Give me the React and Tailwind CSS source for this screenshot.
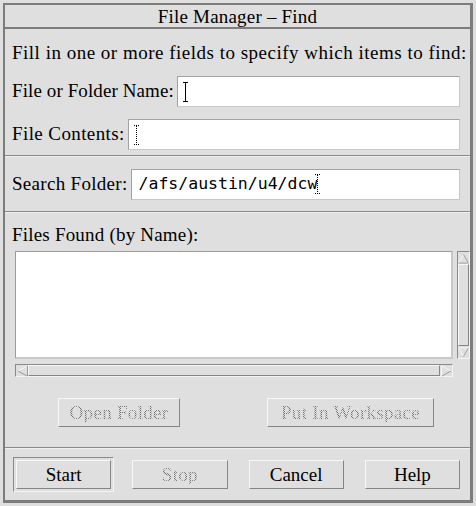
import React from "react";

const SERIF = "font-['Liberation_Serif',serif]";

function Cursor({ dotted = false }) {
  const dash = dotted ? "1 1" : undefined;
  return (
    <svg width="7" height="20" viewBox="0 0 7 20" className="shrink-0">
      <g stroke="#000" strokeWidth="1" strokeDasharray={dash} fill="none">
        <line x1="3.5" y1="1" x2="3.5" y2="19" />
        <line x1="1" y1="0.5" x2="6" y2="0.5" />
        <line x1="1" y1="19.5" x2="6" y2="19.5" />
      </g>
    </svg>
  );
}

function Field({ children }) {
  return (
    <div className="flex-1 h-[31px] bg-white border-t border-l border-t-[#a2a2a2] border-l-[#a2a2a2] border-b border-r border-b-[#c8c8c8] border-r-[#c8c8c8] flex items-center pl-[4px]">
      {children}
    </div>
  );
}

function Separator() {
  return (
    <div className="h-[2px] w-full shrink-0 border-t border-t-[#8a8a8a] border-b border-b-[#f0f0f0]" />
  );
}

function Button({ children, disabled = false, className = "" }) {
  return (
    <div
      className={
        "h-[29px] flex items-center justify-center border border-t-[#f7f7f7] border-l-[#f7f7f7] border-b-[#858585] border-r-[#858585] bg-[#dfdfdf] text-[19px] leading-none " +
        className
      }
    >
      {disabled ? (
        <span className="tracking-[0.3px] bg-[repeating-conic-gradient(#6a6a6a_0_25%,transparent_0_50%)] bg-[length:2px_2px] bg-clip-text text-transparent">
          {children}
        </span>
      ) : (
        <span className="text-black">{children}</span>
      )}
    </div>
  );
}

function Arrow({ dir }) {
  if (dir === "up")
    return (
      <svg width="12" height="11" viewBox="0 0 12 11">
        <polygon points="6,1 11,10 1,10" fill="#dfdfdf" />
        <line x1="6" y1="1" x2="1" y2="10" stroke="#f7f7f7" />
        <line x1="6" y1="1" x2="11" y2="10" stroke="#9a9a9a" />
        <line x1="1" y1="10.5" x2="11" y2="10.5" stroke="#9a9a9a" />
      </svg>
    );
  if (dir === "down")
    return (
      <svg width="12" height="11" viewBox="0 0 12 11">
        <polygon points="1,1 11,1 6,10" fill="#dfdfdf" />
        <line x1="1" y1="0.5" x2="11" y2="0.5" stroke="#f7f7f7" />
        <line x1="1" y1="1" x2="6" y2="10" stroke="#f7f7f7" />
        <line x1="11" y1="1" x2="6" y2="10" stroke="#9a9a9a" />
      </svg>
    );
  if (dir === "left")
    return (
      <svg width="11" height="12" viewBox="0 0 11 12">
        <polygon points="1,6 10,1 10,11" fill="#dfdfdf" />
        <line x1="1" y1="6" x2="10" y2="1" stroke="#f7f7f7" />
        <line x1="1" y1="6" x2="10" y2="11" stroke="#9a9a9a" />
        <line x1="10.5" y1="1" x2="10.5" y2="11" stroke="#9a9a9a" />
      </svg>
    );
  return (
    <svg width="11" height="12" viewBox="0 0 11 12">
      <polygon points="1,1 10,6 1,11" fill="#dfdfdf" />
      <line x1="0.5" y1="1" x2="0.5" y2="11" stroke="#f7f7f7" />
      <line x1="1" y1="1" x2="10" y2="6" stroke="#f7f7f7" />
      <line x1="1" y1="11" x2="10" y2="6" stroke="#9a9a9a" />
    </svg>
  );
}

export default function App() {
  return (
    <div className={"w-[476px] h-[506px] bg-[#dfdfdf] p-[3px] text-black " + SERIF}>
      <div className="w-full h-full border-t-2 border-l-2 border-r-[3px] border-b-[3px] border-[#7c7c7c] flex flex-col">
        {/* Title */}
        <div className="h-[24px] shrink-0 flex items-center justify-center text-[19px] leading-none tracking-[0.2px] border-b-2 border-b-[#7c7c7c]">
          File Manager – Find
        </div>

        {/* Instructions */}
        <div className="h-[40px] shrink-0 flex items-end pb-[7px] pl-[7px] text-[19px] leading-none tracking-[0.5px] whitespace-nowrap">
          Fill in one or more fields to specify which items to find:
        </div>

        {/* File or Folder Name */}
        <div className="h-[45px] shrink-0 flex items-center pl-[7px] pr-[10px] text-[19px] whitespace-nowrap">
          <span className="mr-[3px] tracking-[0.1px]">File or Folder Name:</span>
          <Field>
            <Cursor />
          </Field>
        </div>

        {/* File Contents */}
        <div className="h-[41px] shrink-0 flex items-center pl-[7px] pr-[10px] text-[19px] whitespace-nowrap">
          <span className="mr-[3px] tracking-[0.4px]">File Contents:</span>
          <Field>
            <Cursor dotted />
          </Field>
        </div>

        <Separator />

        {/* Search Folder */}
        <div className="h-[54px] shrink-0 flex items-center pl-[7px] pr-[10px] text-[19px] whitespace-nowrap">
          <span className="mr-[3px] tracking-[0.3px]">Search Folder:</span>
          <Field>
            <span className="font-['DejaVu_Sans_Mono',monospace] text-[16.5px] ml-[3px]">/afs/austin/u4/dcw</span>
            <span className="-ml-[3px]">
              <Cursor dotted />
            </span>
          </Field>
        </div>

        <Separator />

        {/* Files Found */}
        <div className="h-[36px] shrink-0 flex items-center pl-[7px] text-[19px] leading-none tracking-[0.2px] whitespace-nowrap pt-[7px]">
          Files Found (by Name):
        </div>

        <div className="shrink-0 flex pl-[10px] mt-[2px]">
          <div className="flex flex-col w-[438px]">
            <div className="h-[108px] bg-white border-t border-l border-t-[#9c9c9c] border-l-[#9c9c9c] border-b-2 border-r-2 border-b-[#c8c8c8] border-r-[#c8c8c8]" />
            <div className="mt-[5px] h-[13px] flex border border-t-[#8a8a8a] border-l-[#8a8a8a] border-b-[#f4f4f4] border-r-[#f4f4f4]">
              <div className="w-[12px] flex items-center justify-center">
                <Arrow dir="left" />
              </div>
              <div className="flex-1 border border-t-[#f7f7f7] border-l-[#f7f7f7] border-b-[#858585] border-r-[#858585]" />
              <div className="w-[12px] flex items-center justify-center">
                <Arrow dir="right" />
              </div>
            </div>
          </div>
          <div className="ml-[4px] w-[13px] h-[108px] flex flex-col border border-t-[#8a8a8a] border-l-[#8a8a8a] border-b-[#f4f4f4] border-r-[#f4f4f4]">
            <div className="h-[12px] flex items-center justify-center">
              <Arrow dir="up" />
            </div>
            <div className="flex-1 border border-t-[#f7f7f7] border-l-[#f7f7f7] border-b-[#858585] border-r-[#858585]" />
            <div className="h-[12px] flex items-center justify-center">
              <Arrow dir="down" />
            </div>
          </div>
        </div>

        {/* Action buttons */}
        <div className="flex-1 flex items-center pl-[53px]">
          <Button disabled className="w-[122px]">Open Folder</Button>
          <Button disabled className="w-[167px] ml-[87px]">Put In Workspace</Button>
        </div>

        <Separator />

        {/* Bottom buttons */}
        <div className="h-[51px] shrink-0 grid grid-cols-4 gap-x-[21px] items-center pl-[11px] pr-[10px]">
          <div className="-m-[3px] p-[2px] border border-t-[#8a8a8a] border-l-[#8a8a8a] border-b-[#f4f4f4] border-r-[#f4f4f4]">
            <Button>Start</Button>
          </div>
          <Button disabled>Stop</Button>
          <Button>Cancel</Button>
          <Button>Help</Button>
        </div>
      </div>
    </div>
  );
}
